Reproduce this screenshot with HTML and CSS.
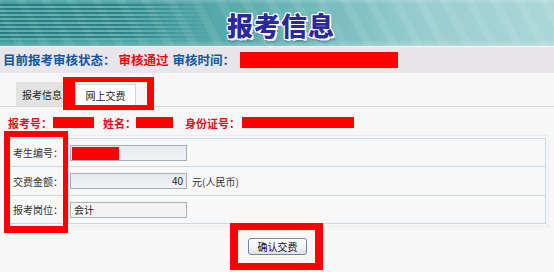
FILE: index.html
```html
<!DOCTYPE html>
<html lang="zh-CN">
<head>
<meta charset="utf-8">
<title>报考信息</title>
<link rel="stylesheet" href="styles.css">
</head>
<body>
<div class="page">
  <header class="banner">
    <h1 class="title">报考信息</h1>
  </header>
  <div class="status">
    <span class="blue">目前报考审核状态：</span><span class="red">审核通过</span>
    <span class="blue">审核时间：</span><span class="redact status-redact"></span>
  </div>
  <div class="tabs">
    <div class="tab tab-off">报考信息</div>
    <div class="tab tab-on">网上交费</div>
  </div>
  <div class="info">
    <span class="info-label">报考号：</span><span class="redact r1"></span>
    <span class="info-label l2">姓名：</span><span class="redact r2"></span>
    <span class="info-label l3">身份证号：</span><span class="redact r3"></span>
  </div>
  <div class="form-wrap">
    <div class="form">
      <div class="row row-a">
        <div class="label">考生编号：</div>
        <div class="value"><div class="field"><span class="redact r4"></span></div></div>
      </div>
      <div class="row row-b">
        <div class="label">交费金额：</div>
        <div class="value"><div class="field field-num">40</div><span class="unit">元(人民币)</span></div>
      </div>
      <div class="row row-a">
        <div class="label">报考岗位：</div>
        <div class="value"><div class="field field-light">会计</div></div>
      </div>
    </div>
  </div>
  <div class="actions">
    <button class="btn" type="button">确认交费</button>
  </div>
  <div class="mark mark-tab"></div>
  <div class="mark mark-labels"></div>
  <div class="mark mark-btn"></div>
</div>
</body>
</html>
```
FILE: styles.css
```css
html, body {
  margin: 0;
  padding: 0;
  background: #f7f7f7;
}
.page {
  position: relative;
  width: 554px;
  height: 272px;
  overflow: hidden;
  font-family: "Noto Sans CJK SC", "Liberation Sans", sans-serif;
  color: #222;
}
.banner {
  position: relative;
  height: 46px;
  box-sizing: border-box;
  padding-top: 4px;
  display: flex;
  align-items: center;
  justify-content: center;
  background:
    repeating-linear-gradient(62deg, rgba(255,255,255,0) 0 14px, rgba(255,255,255,0.08) 14px 22px),
    linear-gradient(180deg, rgba(255,255,255,0.18) 0, rgba(255,255,255,0) 4px, rgba(255,255,255,0) 40px, rgba(255,255,255,0.2) 46px),
    linear-gradient(90deg, #3e9a9b 0%, #47a0a2 22%, #57a9ab 40%, #74bbbd 58%, #98cdcf 76%, #acd7d8 100%);
  overflow: hidden;
}
.banner::before {
  content: "";
  position: absolute;
  left: 0;
  top: 4px;
  bottom: 6px;
  width: 210px;
  background: repeating-linear-gradient(180deg, rgba(25,100,105,0.55) 0 2px, rgba(150,210,210,0.35) 2px 4px);
  -webkit-mask-image: linear-gradient(90deg, #000 0, #000 55%, transparent 100%);
  mask-image: linear-gradient(90deg, #000 0, #000 55%, transparent 100%);
}
.title {
  position: relative;
  margin: 0 0 0 8px;
  font-size: 26px;
  font-weight: 900;
  letter-spacing: 1px;
  line-height: 30px;
  color: #2c2a98;
  text-shadow:
    1px 0 0 #fff, -1px 0 0 #fff, 0 1px 0 #fff, 0 -1px 0 #fff,
    1px 1px 0 #fff, -1px -1px 0 #fff, 1px -1px 0 #fff, -1px 1px 0 #fff,
    2px 2px 0 #eef, 2px 3px 3px rgba(0,40,60,0.45);
}
.status {
  margin-top: 1px;
  height: 26px;
  line-height: 26px;
  background: #e8e6eb;
  padding-left: 3px;
  font-size: 12.5px;
  font-weight: 700;
  white-space: nowrap;
  display: flex;
  align-items: center;
}
.blue { color: #14579a; }
.red { color: #e0101a; margin-left: 3px; margin-right: 4px; }
.redact {
  display: inline-block;
  background: #ff0000;
}
.status-redact {
  width: 158px;
  height: 16px;
  margin-left: 5px;
}
.tabs {
  height: 34px;
  box-sizing: border-box;
  border-bottom: 1px solid #d7d7d7;
  padding-left: 16px;
  display: flex;
  align-items: flex-end;
  gap: 7px;
  font-size: 10px;
}
.tab {
  display: flex;
  align-items: center;
  justify-content: center;
  box-sizing: border-box;
}
.tab-off {
  width: 52px;
  height: 24px;
  background: #e2e2e2;
  color: #222;
}
.tab-on {
  width: 61px;
  height: 22px;
  background: #fff;
  border: 1px solid #d4d4d4;
  border-bottom: none;
  color: #222;
}
.info {
  height: 31px;
  display: flex;
  align-items: center;
  padding-left: 8px;
  font-size: 11px;
  font-weight: 700;
  color: #e0101a;
  white-space: nowrap;
}
.r1 { width: 41px; height: 11px; margin-left: 1px; }
.l2 { margin-left: 9px; }
.r2 { width: 37px; height: 11px; margin-left: 0; }
.l3 { margin-left: 12px; }
.r3 { width: 112px; height: 11px; margin-left: 2px; }
.form-wrap {
  margin-left: 8px;
  width: 538px;
  outline: 1px solid #e6edf3;
  outline-offset: 2px;
}
.form {
  border: 1px solid #c9d8e6;
  background: #f8f8f8;
}
.row {
  display: flex;
  align-items: center;
  font-size: 10px;
}
.row + .row { border-top: 1px solid #c9d8e6; }
.row-a { height: 27px; }
.row-b { height: 28px; }
.label {
  width: 55px;
  padding-left: 4px;
  color: #333;
  align-self: stretch;
  display: flex;
  align-items: center;
  border-right: 1px solid #d9e3ec;
}
.value {
  display: flex;
  align-items: center;
  padding-left: 1px;
}
.field {
  width: 117px;
  height: 16px;
  box-sizing: border-box;
  border: 1px solid #a6adb5;
  background: linear-gradient(180deg, #e6eaee, #f1f3f5);
  display: flex;
  align-items: center;
  padding-left: 1px;
  color: #222;
  line-height: 14px;
}
.r4 { width: 47px; height: 13px; margin-top: 1px; }
.field-num {
  justify-content: flex-end;
  padding-right: 3px;
}
.field-light {
  background: #f4f4f4;
  border-color: #b3b3b3;
  padding-left: 3px;
}
.unit {
  margin-left: 5px;
  color: #333;
}
.actions {
  display: flex;
  justify-content: center;
  padding-top: 14px;
  padding-left: 0;
}
.btn {
  width: 59px;
  height: 17px;
  padding: 0;
  margin-left: 1px;
  border: 1px solid #6d86a3;
  border-radius: 3px;
  background: linear-gradient(180deg, #ffffff 0%, #f1f3f6 55%, #dde2e9 100%);
  font-family: "Noto Sans CJK SC", sans-serif;
  font-size: 10px;
  line-height: 15px;
  color: #111;
}
.mark {
  position: absolute;
  box-sizing: border-box;
  border: 0 solid #ff0000;
}
.mark-tab {
  left: 63px;
  top: 77px;
  width: 91px;
  height: 33px;
  border-width: 5px 7px 5px 12px;
}
.mark-labels {
  left: 4px;
  top: 131px;
  width: 64px;
  height: 102px;
  border-width: 6px 5px 7px 6px;
}
.mark-btn {
  left: 230px;
  top: 223px;
  width: 93px;
  height: 47px;
  border-width: 7px 8px 7px 8px;
}
```
